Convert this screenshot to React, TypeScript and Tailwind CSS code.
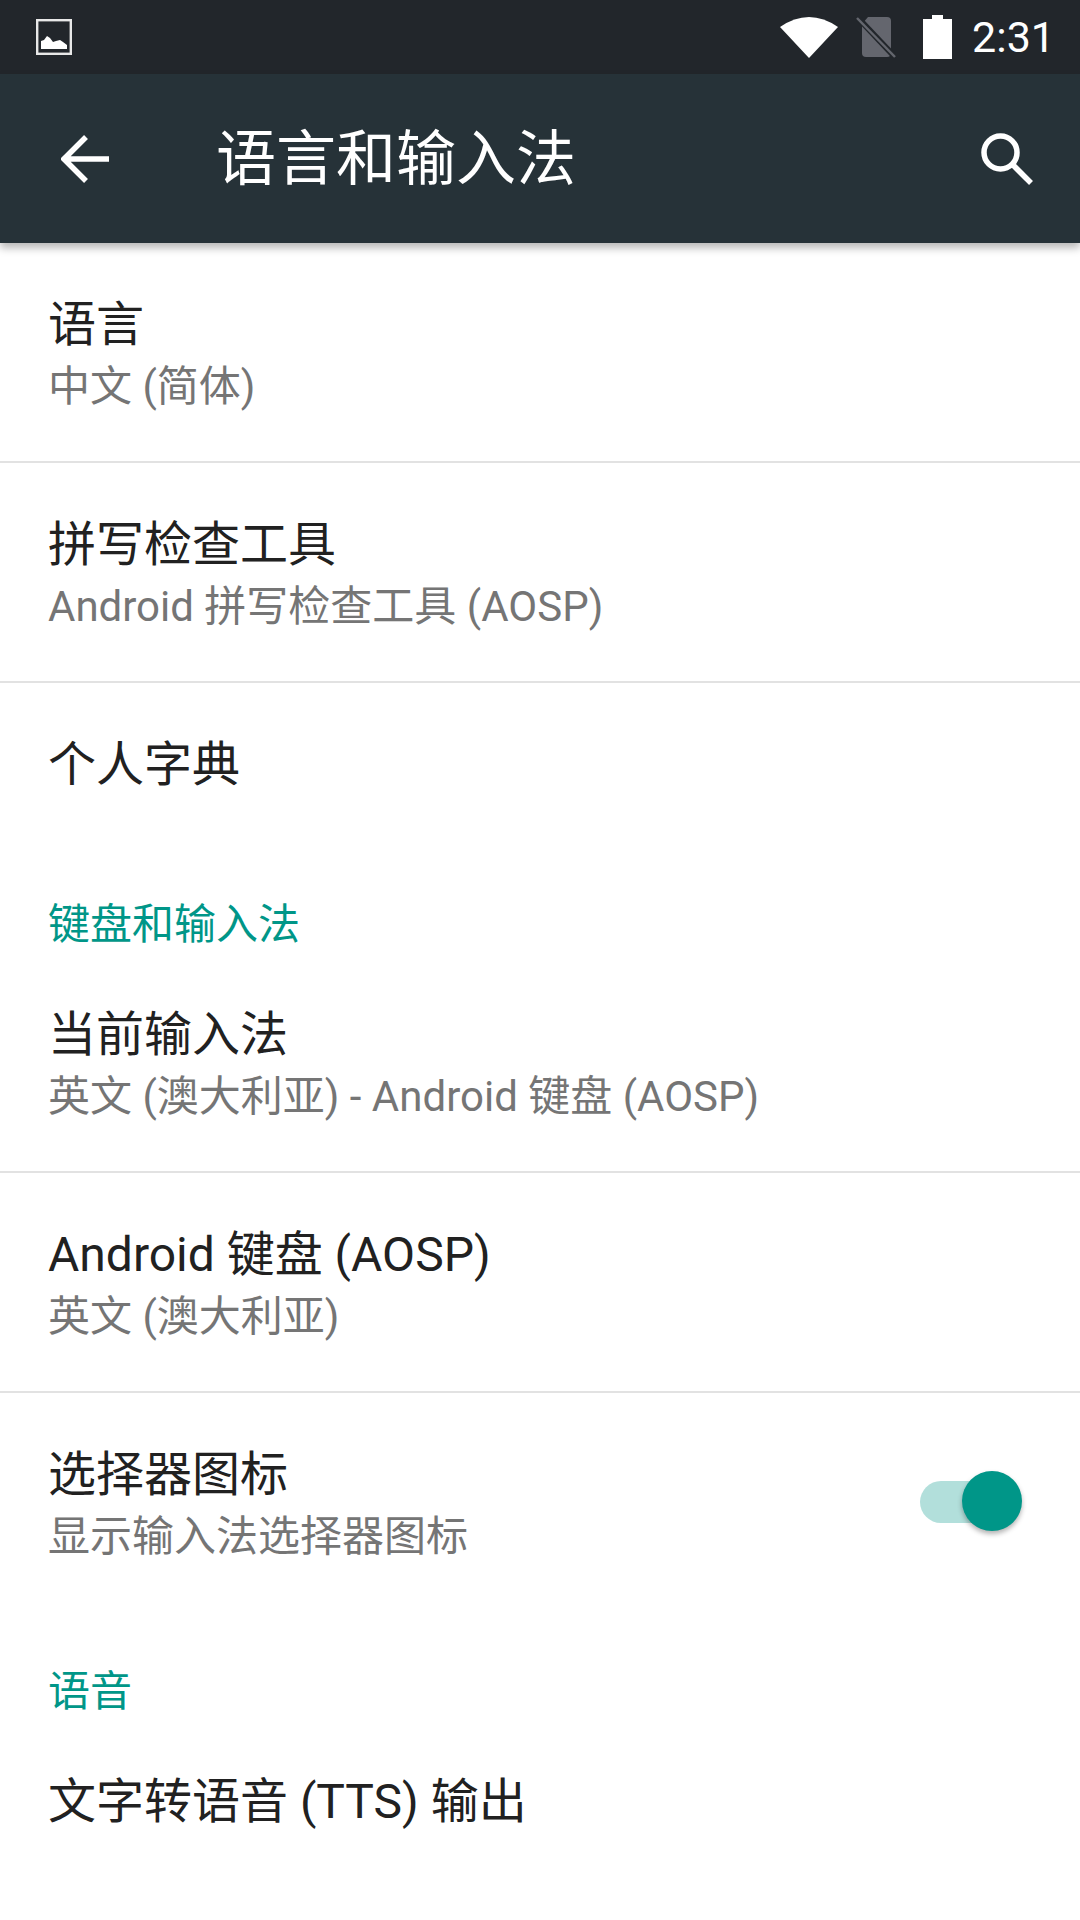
const fontStack = "font-['Roboto','Noto_Sans_CJK_SC',sans-serif]";

type RowProps = {
  title: string;
  subtitle?: string;
  divider?: boolean;
  height: string;
  children?: React.ReactNode;
};

const Row = ({ title, subtitle, divider, height, children }: RowProps) => {
  return (
    <div className={`flex items-start justify-between pl-[48px] pr-[76px] pt-[51px] ${height} ${divider ? "border-b-2 border-[#e2e2e2]" : ""}`}>
      <div>
        <div className="text-[48px] leading-[62px] text-[#212121]">{title}</div>
        {subtitle && <div className="text-[42px] leading-[62px] text-[#757575]">{subtitle}</div>}
      </div>
      {children}
    </div>
  );
};

const SectionHeader = ({ title, height }: { title: string; height: string }) => {
  return (
    <div className={`flex items-end pl-[48px] text-[42px] leading-[56px] text-[#009688] ${height}`}>
      {title}
    </div>
  );
};

const StatusBar = () => {
  return (
    <div className="flex h-[74px] items-center justify-between bg-[#22262b] pl-[36px] pr-[25px]">
      <svg width="36" height="36" viewBox="0 0 36 36">
        <rect x="1.2" y="1.2" width="33.6" height="33.6" fill="none" stroke="#e8e8e8" strokeWidth="2.4" />
        <path d="M5 30V22l3-1 3-4 3 2 3 4 3-1 4-1 3 2 4 3v4z" fill="#fff" />
      </svg>
      <div className="flex items-center">
        <svg width="58" height="41" viewBox="0 0 58 41" className="mr-[18px]">
          <path d="M0 10Q29-10 58 10L29 41z" fill="#fff" />
        </svg>
        <svg width="40" height="42" viewBox="0 0 40 42" className="mr-[27px]">
          <path d="M6 8 12 1h19a4 4 0 0 1 4 4v32a4 4 0 0 1-4 4H10a4 4 0 0 1-4-4z" fill="#64666e" />
          <path d="M3 3 38 40" stroke="#22262b" strokeWidth="6" />
          <path d="M1 2 39 41" stroke="#64666e" strokeWidth="2.5" />
        </svg>
        <svg width="29" height="44" viewBox="0 0 29 44" className="mr-[20px]">
          <path d="M9 0h11v4h9v40H0V4h9z" fill="#fff" />
        </svg>
        <span className="text-[43px] leading-none text-white">2:31</span>
      </div>
    </div>
  );
};

const AppBar = () => {
  return (
    <div className="relative flex h-[169px] items-center bg-[#263238] pl-[61px] pr-[47px] shadow-[0_5px_8px_rgba(0,0,0,0.28)]">
      <svg width="48" height="48" viewBox="0 0 48 48" fill="none" stroke="#fff" strokeWidth="5.5" className="shrink-0">
        <path d="M48 24H4M25 2 3 24l22 22" />
      </svg>
      <div className="ml-[107px] flex-1 pt-[2px] text-[60px] leading-none text-white">语言和输入法</div>
      <svg width="52" height="52" viewBox="0 0 52 52" fill="none" stroke="#fff" strokeWidth="5.5" className="shrink-0">
        <circle cx="19.5" cy="19.5" r="16.5" />
        <path d="M31 31 50 50" />
      </svg>
    </div>
  );
};

const App = () => {
  return (
    <div className={`h-[1920px] w-[1080px] overflow-hidden bg-white ${fontStack}`}>
      <StatusBar />
      <AppBar />
      <Row title="语言" subtitle="中文 (简体)" divider height="h-[220px]" />
      <Row title="拼写检查工具" subtitle="Android 拼写检查工具 (AOSP)" divider height="h-[220px]" />
      <Row title="个人字典" height="h-[176px]" />
      <SectionHeader title="键盘和输入法" height="h-[94px]" />
      <Row title="当前输入法" subtitle="英文 (澳大利亚) - Android 键盘 (AOSP)" divider height="h-[220px]" />
      <Row title="Android 键盘 (AOSP)" subtitle="英文 (澳大利亚)" divider height="h-[220px]" />
      <Row title="选择器图标" subtitle="显示输入法选择器图标" height="h-[176px]">
        <div className="relative mt-[37px] h-[42px] w-[84px] shrink-0 rounded-full bg-[#b2dfdb]">
          <div className="absolute right-[-18px] top-[-10px] h-[60px] w-[60px] rounded-full bg-[#009688] shadow-[0_3px_5px_rgba(0,0,0,0.3)]" />
        </div>
      </Row>
      <SectionHeader title="语音" height="h-[151px]" />
      <Row title="文字转语音 (TTS) 输出" height="h-[198px]" />
    </div>
  );
};

export default App;
